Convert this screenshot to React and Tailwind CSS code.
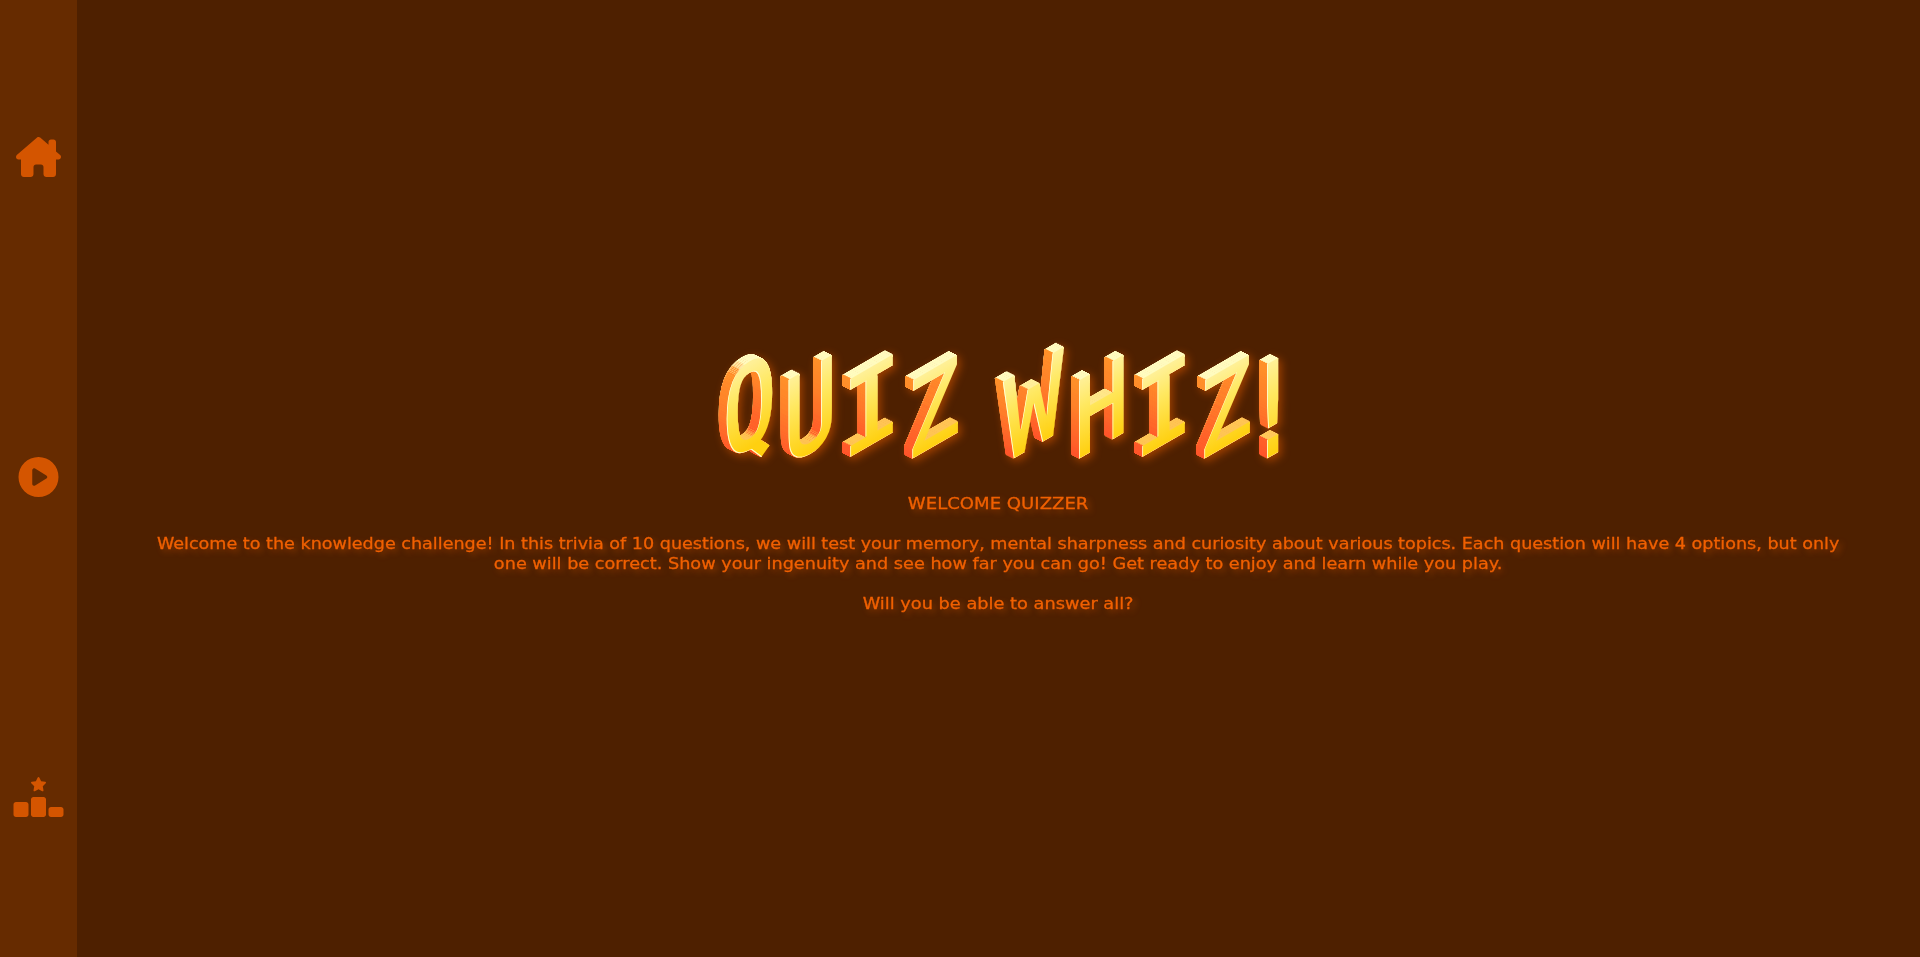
import React from "react";
import { FaHouseChimney, FaCirclePlay, FaRankingStar } from "react-icons/fa6";

// x, y = baseline origin; s = horizontal scale; v = vertical scale
const LETTERS = [
  { c: "Q", x: 723.5, y: 463, s: 0.86, v: 1.1 },
  { c: "U", x: 784, y: 467, s: 0.87, v: 1.09 },
  { c: "I", x: 842.5, y: 461, s: 0.96, v: 1 },
  { c: "Z", x: 907.5, y: 461, s: 0.85, v: 1 },
  { c: "W", x: 1005, y: 463, s: 0.94, v: 1.06 },
  { c: "H", x: 1075, y: 460.5, s: 0.87, v: 1 },
  { c: "I", x: 1134.5, y: 461, s: 0.96, v: 1 },
  { c: "Z", x: 1199.5, y: 461, s: 0.85, v: 1 },
  { c: "!", x: 1246, y: 470, s: 0.88, v: 1.21 },
];

function Title() {
  return (
    <h1 className="h-[150px] w-[620px]">
      <svg width="620" height="150" viewBox="690 320 620 150" role="img" aria-label="Quiz Whiz!">
        <defs>
          <linearGradient id="face" x1="0" y1="-76" x2="0" y2="0" gradientUnits="userSpaceOnUse">
            <stop offset="0" stopColor="#fff096" />
            <stop offset="0.35" stopColor="#ffe860" />
            <stop offset="1" stopColor="#ffd010" />
          </linearGradient>
          <filter id="block" filterUnits="userSpaceOnUse" x="690" y="320" width="620" height="150" colorInterpolationFilters="sRGB">
            <feOffset in="SourceGraphic" dx="1.2" dy="-0.69" result="shiftRight" />
            <feComposite in="SourceGraphic" in2="shiftRight" operator="out" result="leftEdge" />
            <feOffset in="SourceGraphic" dx="0" dy="1.8" result="shiftDown" />
            <feComposite in="SourceGraphic" in2="shiftDown" operator="out" result="topEdge" />

            <feOffset in="leftEdge" dx="-0.7" dy="-0.4" result="l0" />
            <feMerge result="l1"><feMergeNode in="l0" /><feMergeNode in="leftEdge" /></feMerge>
            <feOffset in="l1" dx="-1.3" dy="-0.75" result="l2" />
            <feMerge result="l3"><feMergeNode in="l2" /><feMergeNode in="l1" /></feMerge>
            <feOffset in="l3" dx="-2.5" dy="-1.44" result="l4" />
            <feMerge result="l5"><feMergeNode in="l4" /><feMergeNode in="l3" /></feMerge>
            <feOffset in="l5" dx="-4.4" dy="-2.5" result="l6" />
            <feMerge result="l7"><feMergeNode in="l6" /><feMergeNode in="l5" /></feMerge>
            <feColorMatrix in="l7" type="matrix" values="1 0 0 0 0  0 1.9 0 0 -1.22  0 0 0 0 0.16  0 0 0 2.2 -0.3" result="sides" />

            <feOffset in="topEdge" dx="-0.7" dy="-0.4" result="t0" />
            <feMerge result="t1"><feMergeNode in="t0" /><feMergeNode in="topEdge" /></feMerge>
            <feOffset in="t1" dx="-1.3" dy="-0.75" result="t2" />
            <feMerge result="t3"><feMergeNode in="t2" /><feMergeNode in="t1" /></feMerge>
            <feOffset in="t3" dx="-2.5" dy="-1.44" result="t4" />
            <feMerge result="t5"><feMergeNode in="t4" /><feMergeNode in="t3" /></feMerge>
            <feOffset in="t5" dx="-4.4" dy="-2.5" result="t6" />
            <feMerge result="t7"><feMergeNode in="t6" /><feMergeNode in="t5" /></feMerge>
            <feColorMatrix in="t7" type="matrix" values="1 0 0 0 0  0 2 0 0 -0.9  0 0 0.9 0 0.22  0 0 0 2 0" result="tops" />

            <feColorMatrix in="leftEdge" type="matrix" values="0 0 0 0 1  0 0 0 0 1  0 0 0 0 0.88  0 0 0 1 -0.15" result="shine" />
            <feMerge result="solid">
              <feMergeNode in="tops" />
              <feMergeNode in="sides" />
              <feMergeNode in="SourceGraphic" />
              <feMergeNode in="shine" />
            </feMerge>
            <feDropShadow in="solid" dx="3" dy="3" stdDeviation="4" floodColor="#ff6600" floodOpacity="0.45" />
          </filter>
        </defs>
        <g filter="url(#block)" fontFamily="'DejaVu Sans Mono', monospace" fontSize="104" fill="url(#face)" stroke="url(#face)" strokeWidth="2.2">
          {LETTERS.map((l) => (
            <text key={l.x} transform={`matrix(${l.s} ${-0.577 * l.s} 0 ${l.v} ${l.x} ${l.y})`}>
              {l.c}
            </text>
          ))}
        </g>
      </svg>
    </h1>
  );
}

export default function App() {
  return (
    <div className="flex h-[957px] w-full overflow-hidden bg-[#4e2000]">
      <nav className="flex w-[77px] shrink-0 flex-col items-center gap-[280px] bg-[#662b00] pt-[137px] text-[#d45500]">
        <FaHouseChimney className="h-10 w-[45px] shrink-0" />
        <FaCirclePlay className="h-10 w-[41px] shrink-0" />
        <FaRankingStar className="h-10 w-[51px] shrink-0" />
      </nav>
      <main className="flex flex-1 flex-col items-center pt-[320px]">
        <Title />
        <div className="mt-6 flex flex-col gap-5 text-center font-['DejaVu_Sans',sans-serif] text-base leading-5 whitespace-nowrap text-[#f06000] [-webkit-text-stroke:0.3px_#f06000] [text-shadow:3px_3px_6px_#ff660066]">
          <p className="scale-x-[1.13]">WELCOME QUIZZER</p>
          <div>
            <p className="scale-x-[1.098]">
              Welcome to the knowledge challenge! In this trivia of 10 questions, we will test your memory, mental sharpness and curiosity about various topics. Each question will have 4 options, but only
            </p>
            <p className="scale-x-[1.104]">
              one will be correct. Show your ingenuity and see how far you can go! Get ready to enjoy and learn while you play.
            </p>
          </div>
          <p className="scale-x-[1.11]">Will you be able to answer all?</p>
        </div>
      </main>
    </div>
  );
}
